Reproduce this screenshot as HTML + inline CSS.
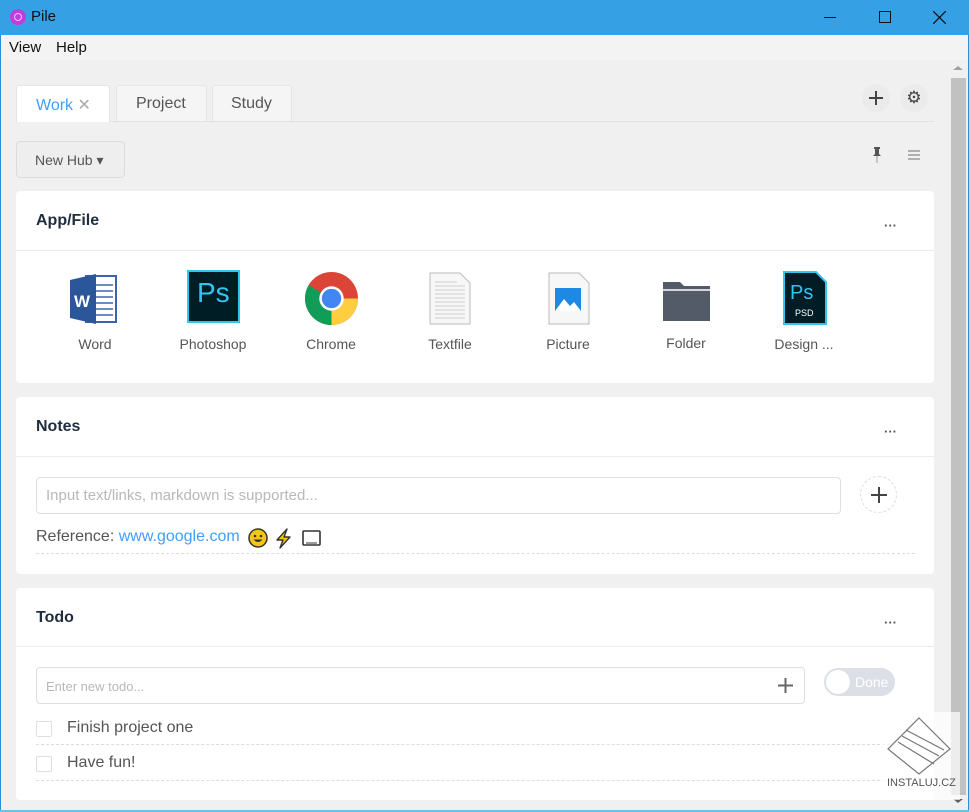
<!DOCTYPE html>
<html><head><meta charset="utf-8"><style>
*{box-sizing:border-box;margin:0;padding:0}
body{width:969px;height:812px;overflow:hidden;background:#f0f0f0;font-family:"Liberation Sans",sans-serif;position:relative;color:#333}
.a{position:absolute}
.title{left:0;top:0;width:969px;height:35px;background:#36a0e4}
.card{background:#fff;border-radius:4px}
.hl{height:1px;background:#ececec}
.h{font-weight:bold;font-size:16px;color:#1f2d3d}
.dots{font-size:13px;font-weight:bold;color:#555}
.lbl{font-size:14px;color:#555;text-align:center;width:110px}
.dash{border-top:1px dashed #ddd;height:0}
</style></head><body>
<div class="a title"></div>
<div class="a" style="left:10px;top:9px;width:16px;height:16px;border-radius:50%;background:#c13de0"></div>
<div class="a" style="left:14px;top:13px;width:8px;height:8px;border-radius:50%;border:1.5px solid #f6c6ff"></div>
<div class="a" style="left:31px;top:8px;font-size:15px;color:#111">Pile</div>
<div class="a" style="left:824px;top:17px;width:12px;height:1px;background:#111"></div>
<div class="a" style="left:879px;top:11px;width:12px;height:12px;border:1.5px solid #111"></div>
<svg class="a" style="left:933px;top:11px" width="13" height="13"><path d="M0 0L13 13M13 0L0 13" stroke="#111" stroke-width="1.3"/></svg>
<div class="a" style="left:0;top:35px;width:969px;height:25px;background:#f3f3f3"></div>
<div class="a" style="left:9px;top:39px;font-size:15px;color:#111">View</div>
<div class="a" style="left:56px;top:39px;font-size:15px;color:#111">Help</div>
<div class="a" style="left:0;top:35px;width:1px;height:777px;background:#2b8fd6"></div>
<div class="a" style="left:968px;top:35px;width:1px;height:777px;background:#2b8fd6"></div>
<div class="a" style="left:0;top:810px;width:969px;height:2px;background:#6cc0ea"></div>
<!-- scrollbar -->
<div class="a" style="left:950px;top:60px;width:17px;height:750px;background:#f0f0f0"></div>
<div class="a" style="left:953px;top:66px;width:0;height:0;border-left:5px solid transparent;border-right:5px solid transparent;border-bottom:4px solid #a0a0a0"></div>
<div class="a" style="left:951px;top:78px;width:15px;height:717px;background:#c1c1c1"></div>
<div class="a" style="left:953px;top:799px;width:0;height:0;border-left:5px solid transparent;border-right:5px solid transparent;border-top:4px solid #606060"></div>
<!-- tabs -->
<div class="a" style="left:16px;top:121px;width:918px;height:1px;background:#e2e2e2"></div>
<div class="a" style="left:16px;top:85px;width:94px;height:37px;background:#fff;border:1px solid #e4e4e4;border-bottom:none;border-radius:3px 3px 0 0"></div>
<div class="a" style="left:36px;top:95px;font-size:16px;color:#409eff">Work <span style="color:#aaa">✕</span></div>
<div class="a" style="left:116px;top:85px;width:91px;height:36px;background:#f5f5f5;border:1px solid #e4e4e4;border-bottom:none;border-radius:3px 3px 0 0"></div>
<div class="a" style="left:136px;top:95px;font-size:16px;color:#555">Project</div>
<div class="a" style="left:212px;top:85px;width:80px;height:36px;background:#f5f5f5;border:1px solid #e4e4e4;border-bottom:none;border-radius:3px 3px 0 0"></div>
<div class="a" style="left:231px;top:95px;font-size:16px;color:#555">Study</div>
<div class="a" style="left:862px;top:84px;width:28px;height:28px;border-radius:50%;background:#ebebeb"></div>
<svg class="a" style="left:869px;top:91px" width="14" height="14"><path d="M7 0v14M0 7h14" stroke="#444" stroke-width="2"/></svg>
<div class="a" style="left:900px;top:84px;width:28px;height:28px;border-radius:50%;background:#ebebeb;text-align:center;font-size:17px;line-height:28px;color:#444">⚙</div>
<!-- new hub -->
<div class="a" style="left:16px;top:141px;width:109px;height:37px;border:1px solid #dcdcdc;border-radius:4px;background:#eeeeee"></div>
<div class="a" style="left:35px;top:152px;font-size:14px;color:#555">New Hub ▾</div>
<svg class="a" style="left:872px;top:147px" width="10" height="16"><path d="M2 0h6v2H7v5l2 2H1l2-2V2H2z" fill="#555"/><path d="M5 9v7" stroke="#999" stroke-width="1"/></svg>
<svg class="a" style="left:908px;top:150px" width="12" height="10"><path d="M0 1h12M0 5h12M0 9h12" stroke="#888" stroke-width="1.2"/></svg>
<!-- card 1 -->
<div class="a card" style="left:16px;top:191px;width:918px;height:192px"></div>
<div class="a h" style="left:36px;top:212px">App/File</div>
<div class="a dots" style="left:884px;top:218px">···</div>
<div class="a hl" style="left:16px;top:250px;width:918px"></div>
<svg class="a" style="left:68px;top:272px" width="54" height="54"><path d="M18 4h30v46H18z" fill="#fff" stroke="#3d63ae" stroke-width="2"/><path d="M25 13h20M25 19h20M25 25h20M25 31h20M25 37h20M25 43h20" stroke="#3d63ae" stroke-width="1.5"/><path d="M2 8l26-6v50L2 46z" fill="#2b579a"/><text x="6" y="35" fill="#fff" font-size="17" font-weight="bold" font-family="Liberation Sans">W</text></svg>
<div class="a" style="left:187px;top:270px;width:53px;height:53px;background:#001d26;border:2px solid #31c5f0"></div>
<div class="a" style="left:197px;top:277px;font-size:28px;color:#31c5f0">Ps</div>
<svg class="a" style="left:305px;top:272px" width="53" height="53" viewBox="0 0 52 52"><circle cx="26" cy="26" r="26" fill="#db4437"/><path d="M26 26L3.5 39A26 26 0 0 0 26 52L39 26z" fill="#0f9d58"/><path d="M26 26h26A26 26 0 0 1 26 52z" fill="#ffcd40"/><path d="M26 26L3.5 39A26 26 0 0 1 3.5 13z" fill="#0f9d58"/><circle cx="26" cy="26" r="12" fill="#fff"/><circle cx="26" cy="26" r="9.5" fill="#4285f4"/></svg>
<svg class="a" style="left:429px;top:272px" width="42" height="53"><path d="M1 1h30l10 10v41H1z" fill="#f7f7f7" stroke="#bbb"/><path d="M6 10h22M6 14h30M6 18h30M6 22h30M6 26h30M6 30h30M6 34h30M6 38h30M6 42h30M6 46h30" stroke="#ccc"/></svg>
<svg class="a" style="left:548px;top:272px" width="42" height="53"><path d="M1 1h30l10 10v41H1z" fill="#f7f7f7" stroke="#bbb"/><rect x="7" y="16" width="26" height="23" fill="#1e88e5"/><path d="M7 39l9-12 6 7 4-4 7 9z" fill="#fff"/></svg>
<svg class="a" style="left:663px;top:280px" width="47" height="41"><path d="M0 2h17l4 4h26v35H0z" fill="#535a68"/><path d="M0 10h47" stroke="#fff" stroke-width="1.5"/></svg>
<svg class="a" style="left:783px;top:271px" width="44" height="54"><path d="M1 1h32l10 10v42H1z" fill="#001d26" stroke="#31c5f0" stroke-width="2"/><text x="7" y="28" fill="#31c5f0" font-size="20" font-family="Liberation Sans">Ps</text><text x="12" y="45" fill="#fff" font-size="9" font-family="Liberation Sans">PSD</text></svg>
<div class="a lbl" style="left:40px;top:336px">Word</div>
<div class="a lbl" style="left:158px;top:336px">Photoshop</div>
<div class="a lbl" style="left:276px;top:336px">Chrome</div>
<div class="a lbl" style="left:395px;top:336px">Textfile</div>
<div class="a lbl" style="left:513px;top:336px">Picture</div>
<div class="a lbl" style="left:631px;top:335px">Folder</div>
<div class="a lbl" style="left:749px;top:336px">Design ...</div>
<!-- card 2 -->
<div class="a card" style="left:16px;top:397px;width:918px;height:177px"></div>
<div class="a h" style="left:36px;top:418px">Notes</div>
<div class="a dots" style="left:884px;top:424px">···</div>
<div class="a hl" style="left:16px;top:456px;width:918px"></div>
<div class="a" style="left:36px;top:477px;width:805px;height:37px;border:1px solid #dcdfe6;border-radius:4px"></div>
<div class="a" style="left:46px;top:487px;font-size:15px;color:#b8b8b8">Input text/links, markdown is supported...</div>
<div class="a" style="left:860px;top:476px;width:37px;height:37px;border-radius:50%;border:1px dashed #ddd"></div>
<svg class="a" style="left:871px;top:487px" width="16" height="16"><path d="M8 0v16M0 8h16" stroke="#444" stroke-width="2"/></svg>
<div class="a" style="left:36px;top:528px;font-size:16px;color:#555">Reference: <span style="color:#409eff">www.google.com</span></div>
<svg class="a" style="left:248px;top:527px" width="80" height="22"><circle cx="10" cy="11" r="9" fill="#f5c518" stroke="#333" stroke-width="1.5"/><circle cx="7" cy="9" r="1.3" fill="#333"/><circle cx="13" cy="9" r="1.3" fill="#333"/><path d="M5.5 12.5q4.5 5 9 0z" fill="#333"/><path d="M39 2l-10 11h6l-3 8 10-11h-6z" fill="#f5c518" stroke="#333" stroke-width="1.4" stroke-linejoin="round"/><rect x="55" y="4" width="17" height="14" rx="1" fill="#fff" stroke="#333" stroke-width="1.6"/><path d="M58 16h11" stroke="#333"/></svg>
<div class="a dash" style="left:36px;top:553px;width:879px"></div>
<!-- card 3 -->
<div class="a card" style="left:16px;top:588px;width:918px;height:212px"></div>
<div class="a h" style="left:36px;top:609px">Todo</div>
<div class="a dots" style="left:884px;top:615px">···</div>
<div class="a hl" style="left:16px;top:646px;width:918px"></div>
<div class="a" style="left:36px;top:667px;width:769px;height:37px;border:1px solid #dcdfe6;border-radius:4px"></div>
<div class="a" style="left:46px;top:679px;font-size:13px;color:#b8b8b8">Enter new todo...</div>
<svg class="a" style="left:778px;top:678px" width="15" height="15"><path d="M7.5 0v15M0 7.5h15" stroke="#666" stroke-width="2"/></svg>
<div class="a" style="left:824px;top:668px;width:71px;height:28px;border-radius:14px;background:#dcdfe6"></div>
<div class="a" style="left:826px;top:670px;width:24px;height:24px;border-radius:50%;background:#fff"></div>
<div class="a" style="left:855px;top:674px;font-size:14px;color:#fff">Done</div>
<div class="a" style="left:36px;top:721px;width:16px;height:16px;border:1px solid #dcdfe6;border-radius:2px"></div>
<div class="a" style="left:67px;top:719px;font-size:16px;color:#555">Finish project one</div>
<div class="a dash" style="left:36px;top:744px;width:879px"></div>
<div class="a" style="left:36px;top:756px;width:16px;height:16px;border:1px solid #dcdfe6;border-radius:2px"></div>
<div class="a" style="left:67px;top:754px;font-size:16px;color:#555">Have fun!</div>
<div class="a dash" style="left:36px;top:780px;width:879px"></div>
<!-- watermark -->
<div class="a" style="left:880px;top:712px;width:80px;height:88px;background:rgba(255,255,255,0.7)"></div>
<svg class="a" style="left:884px;top:716px" width="70" height="60"><path d="M35 2L66 33 35 58 4 33z" fill="none" stroke="#777" stroke-width="1.2"/><path d="M18 20L55 40M14 26L50 48M22 14L60 34" stroke="#777" stroke-width="1.2"/></svg>
<div class="a" style="left:887px;top:777px;font-size:11px;color:#555">INSTALUJ.CZ</div>
</body></html>
